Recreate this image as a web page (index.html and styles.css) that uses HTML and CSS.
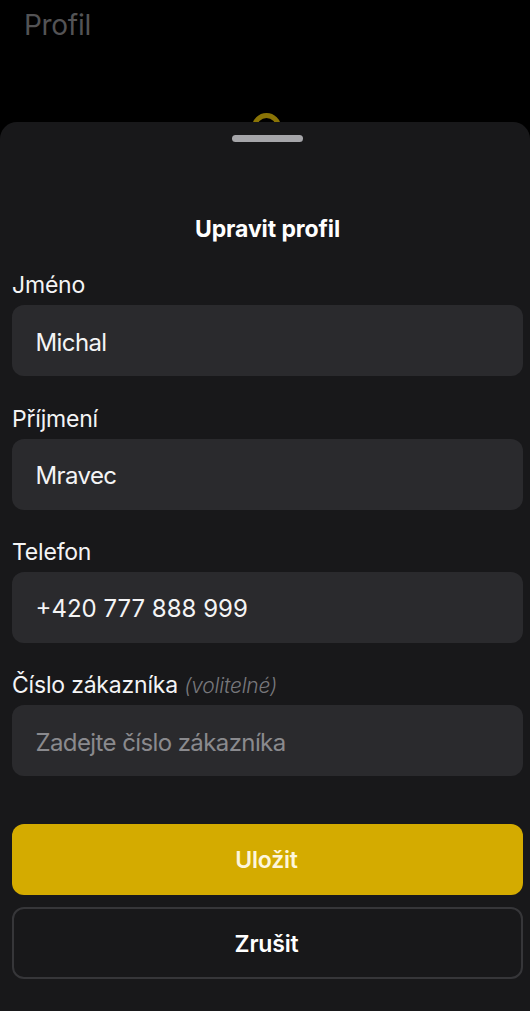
FILE: index.html
```html
<!DOCTYPE html>
<html lang="cs">
<head>
<meta charset="utf-8">
<title>Upravit profil</title>
<link rel="stylesheet" href="styles.css">
</head>
<body>
<div class="screen">
  <header class="backdrop">
    <h1 class="page-title">Profil</h1>
    <div class="ring"></div>
  </header>
  <section class="sheet">
    <div class="handle"></div>
    <h2 class="sheet-title">Upravit profil</h2>
    <div class="field">
      <div class="label">Jméno</div>
      <div class="input">Michal</div>
    </div>
    <div class="field">
      <div class="label">Příjmení</div>
      <div class="input">Mravec</div>
    </div>
    <div class="field">
      <div class="label">Telefon</div>
      <div class="input phone">+420 777 888 999</div>
    </div>
    <div class="field">
      <div class="label">Číslo zákazníka <em class="optional">(volitelné)</em></div>
      <div class="input placeholder">Zadejte číslo zákazníka</div>
    </div>
    <div class="actions">
      <div class="btn primary">Uložit</div>
      <div class="btn secondary">Zrušit</div>
    </div>
  </section>
</div>
</body>
</html>
```
FILE: styles.css
```css
* { box-sizing: border-box; margin: 0; padding: 0; }
html, body { background: #000; }
body { font-family: Inter, "Liberation Sans", sans-serif; }
.screen { width: 530px; height: 1011px; overflow: hidden; display: flex; flex-direction: column; }
.backdrop { height: 122px; flex: none; position: relative; overflow: hidden; padding: 7px 0 0 24px; }
.page-title { font-size: 28px; line-height: 36px; font-weight: 400; color: #535355; letter-spacing: -0.3px; }
.ring { position: absolute; left: 252px; top: 113px; width: 29px; height: 29px; border: 5px solid #8a7406; border-radius: 50%; }
.sheet { flex: 1; background: #18181a; border-radius: 17px 17px 0 0; padding: 13px 7px 0 12px; }
.handle { width: 71px; height: 7px; border-radius: 4px; background: #a5a5a9; margin-left: 220px; }
.sheet-title { font-size: 23px; line-height: 28px; font-weight: 700; color: #fff; text-align: center; margin: 73px 0 28.3px; letter-spacing: -0.1px; }
.field { height: 133.3px; }
.label { font-size: 23px; line-height: 28px; height: 34px; color: #f4f4f5; letter-spacing: -0.2px; }
.optional { font-size: 21px; color: #77777b; font-weight: 300; }
.input { height: 71px; background: #2a2a2d; border-radius: 12px; padding: 3px 23.5px 0; display: flex; align-items: center; font-size: 24px; color: #f4f4f5; letter-spacing: -0.6px; }
.phone { letter-spacing: 0; }
.placeholder { color: #8a8a8e; }
.actions { display: flex; flex-direction: column; gap: 12px; margin-top: 19.5px; }
.btn { height: 71px; border-radius: 12px; display: flex; align-items: center; justify-content: center; font-size: 23px; font-weight: 600; color: #fff; letter-spacing: -0.2px; padding: 2px 2px 0 0; }
.primary { background: #d4ab00; color: #fdf6dc; }
.secondary { height: 72px; border: 2px solid #363639; }
```
